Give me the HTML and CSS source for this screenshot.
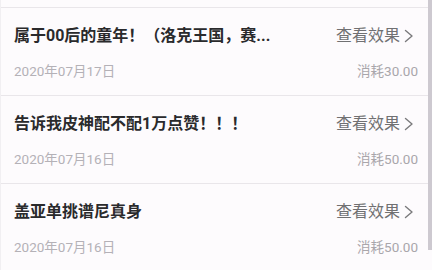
FILE: index.html
```html
<!DOCTYPE html>
<html lang="zh-CN">
<head>
<meta charset="utf-8">
<title>消耗记录</title>
<link rel="stylesheet" href="styles.css">
</head>
<body>
<div class="list">
  <div class="item">
    <div class="row top">
      <span class="title">属于00后的童年！（洛克王国，赛...</span>
      <span class="action">查看效果<svg class="chev" viewBox="0 0 10 14" width="10" height="14"><path d="M1.5 1.5 L8 7 L1.5 12.5" fill="none" stroke="currentColor" stroke-width="1.4" stroke-linecap="round" stroke-linejoin="round"/></svg></span>
    </div>
    <div class="row meta">
      <span class="date">2020年07月17日</span>
      <span class="cost">消耗30.00</span>
    </div>
  </div>
  <div class="item">
    <div class="row top">
      <span class="title">告诉我皮神配不配1万点赞！！！</span>
      <span class="action">查看效果<svg class="chev" viewBox="0 0 10 14" width="10" height="14"><path d="M1.5 1.5 L8 7 L1.5 12.5" fill="none" stroke="currentColor" stroke-width="1.4" stroke-linecap="round" stroke-linejoin="round"/></svg></span>
    </div>
    <div class="row meta">
      <span class="date">2020年07月16日</span>
      <span class="cost">消耗50.00</span>
    </div>
  </div>
  <div class="item">
    <div class="row top">
      <span class="title">盖亚单挑谱尼真身</span>
      <span class="action">查看效果<svg class="chev" viewBox="0 0 10 14" width="10" height="14"><path d="M1.5 1.5 L8 7 L1.5 12.5" fill="none" stroke="currentColor" stroke-width="1.4" stroke-linecap="round" stroke-linejoin="round"/></svg></span>
    </div>
    <div class="row meta">
      <span class="date">2020年07月16日</span>
      <span class="cost">消耗50.00</span>
    </div>
  </div>
</div>
<div class="scrollbar"></div>
</body>
</html>
```
FILE: styles.css
```css
html, body {
  margin: 0;
  padding: 0;
  background: #fdfbfd;
  overflow: hidden;
}
body {
  width: 432px;
  height: 270px;
  font-family: Roboto, "Noto Sans CJK SC", sans-serif;
  position: relative;
}
.list {
  padding-top: 7px;
  border-left: 1px solid #f1eff2;
}
.item {
  border-top: 1px solid #e9e6ea;
  padding: 16px 14px 15px 13px;
}
.row {
  display: flex;
  align-items: center;
  justify-content: space-between;
}
.top {
  height: 24px;
  line-height: 24px;
}
.meta {
  height: 18px;
  line-height: 18px;
  margin-top: 14px;
}
.title {
  font-size: 16px;
  font-weight: 700;
  color: #2a2a2c;
  white-space: nowrap;
}
.action {
  display: flex;
  align-items: center;
  font-size: 16px;
  color: #707072;
  margin-right: 4px;
}
.chev {
  margin-left: 4px;
  color: #7a7a7c;
}
.date, .cost {
  font-size: 13.5px;
  color: #b4b1b7;
}
.cost {
  color: #a9a6ab;
}
.scrollbar {
  position: absolute;
  top: 0;
  right: 0;
  width: 4px;
  height: 250px;
  background: #cdc9d0;
}
```
